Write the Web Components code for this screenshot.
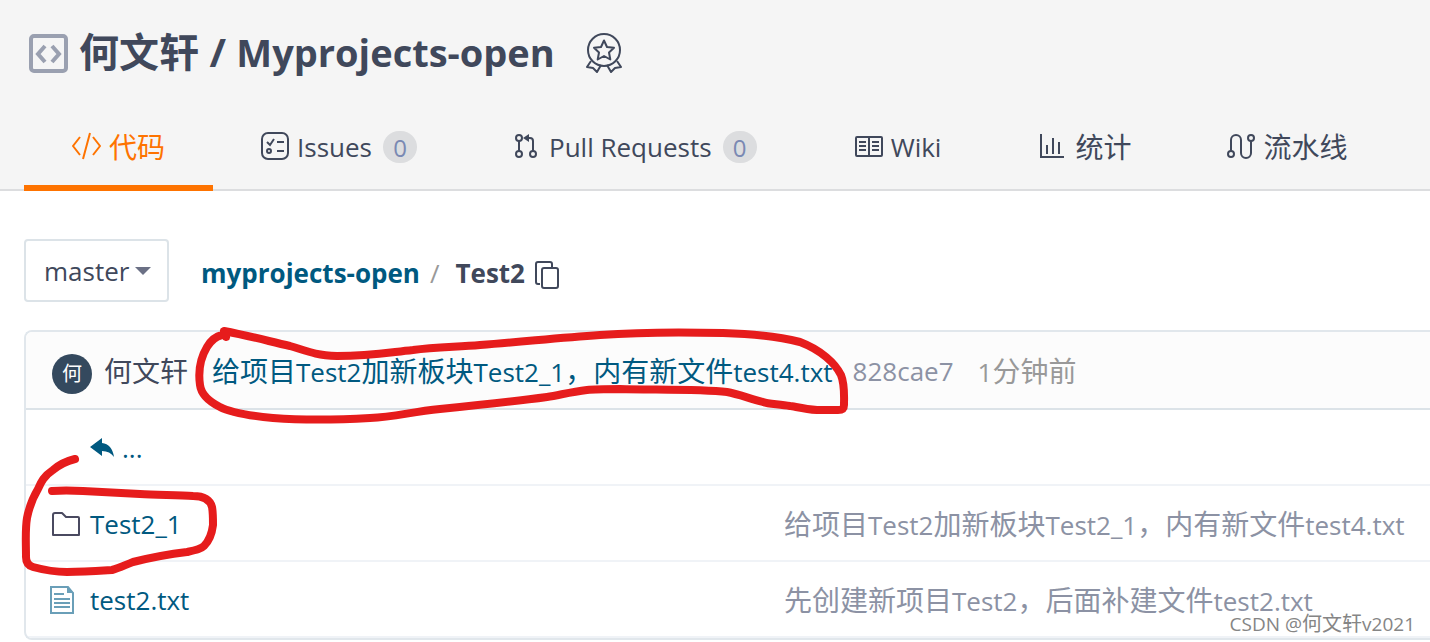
<!DOCTYPE html>
<html lang="zh-CN">
<head>
<meta charset="utf-8">
<meta name="viewport" content="width=device-width, initial-scale=1">
<title>何文轩 / Myprojects-open</title>
<style>
  body {
    margin: 0;
    background: #fff;
    color: #40485b;
    font: 26px/36px "Open Sans", "Noto Sans CJK SC", sans-serif;
    overflow-x: hidden;
  }
</style>
</head>
<body>
<repo-page></repo-page>

<script>
const ICONS = {
  repo: ['0 0 40 40', '<rect x="3" y="2" width="35" height="35" rx="3" fill="none" stroke="#9aa0b0" stroke-width="4"/><path d="M17 12l-7 8 7 8M24 12l7 8-7 8" fill="none" stroke="#9aa0b0" stroke-width="4"/>'],
  medal: ['0 0 38 40', '<g fill="none" stroke="currentColor" stroke-width="2" stroke-linejoin="round"><circle cx="19" cy="17" r="16"/><path d="M19 7.500l3 6.500 7 .8-5 4.700 1.300 7-6.300-3.500-6.300 3.500 1.300-7-5-4.700 7-.8z"/><path d="M6 28l-4 6 6 1 4 4 4-7M32 28l4 6-6 1-4 4-4-7"/></g>'],
  code: ['0 0 29 30', '<path d="M8 5l-7 9 7 9M21 5l7 9-7 9M18 1l-7 26" fill="none" stroke="currentColor" stroke-width="2"/>'],
  issues: ['1 1 28 30', '<g fill="none" stroke="currentColor" stroke-width="2"><rect x="2" y="2" width="26" height="26" rx="6"/><path d="M7 11l3 3 4-6M17 11h7M17 20h7"/><circle cx="9" cy="20" r="2"/></g>'],
  pulls: ['0 1 28 30', '<g fill="none" stroke="currentColor" stroke-width="2"><circle cx="6" cy="7" r="3"/><circle cx="6" cy="23" r="3"/><circle cx="20" cy="23" r="3"/><path d="M6 10v10M20 20V10q0-3-3-3h-4"/></g><path d="M10 7l6-4v8z" fill="currentColor"/>'],
  wiki: ['0 1 30 30', '<g fill="none" stroke="currentColor" stroke-width="2"><rect x="3" y="6" width="26" height="19" rx="1"/><path d="M16 6v19M6 11h7M6 15h7M6 19h7M19 11h7M19 15h7M19 19h7"/></g>'],
  stats: ['-2 1 30 30', '<path d="M2 3v23h23M8 23V14M14 23V7M20 23V11" fill="none" stroke="currentColor" stroke-width="2"/>'],
  pipeline: ['1 1 28 30', '<g fill="none" stroke="currentColor" stroke-width="2"><circle cx="5" cy="23" r="3"/><circle cx="25" cy="7" r="3"/><path d="M5 20V9a5 5 0 0 1 10 0v13a5 5 0 0 0 10 0V10"/></g>'],
  copy: ['0 0 26 30', '<g fill="none" stroke="currentColor" stroke-width="2"><path d="M6 24H4q-2 0-2-2V4q0-2 2-2h12q2 0 2 2v3"/><rect x="8" y="8" width="16" height="20" rx="2"/></g>'],
  back: ['0 0 24 22', '<path d="M0 10L12 1v5q10 1 12 14-4-6-12-6v5z" fill="currentColor"/>'],
  folder: ['-1 0 30 26', '<path d="M2 24V4q0-2 2-2h7l4 4h12q1 0 1 1v17z" fill="none" stroke="#4a4a60" stroke-width="2" stroke-linejoin="round"/>'],
  file: ['0 0 26 30', '<path d="M1 2h17l5 6v20H1zM4 9h10M4 14h16M4 18h16M4 22h16" fill="none" stroke="#6a9fb8" stroke-width="2"/><path d="M17 1v7h7z" fill="#6a9fb8"/>']
};

customElements.define('repo-icon', class extends HTMLElement {
  connectedCallback() {
    const [box, art] = ICONS[this.getAttribute('name')];
    const [, , w, h] = box.split(' ');
    this.attachShadow({ mode: 'open' }).innerHTML = `
      <style>:host { display: inline-flex; flex: none } svg { display: block }</style>
      <svg viewBox="${box}" width="${w}" height="${h}" aria-hidden="true">${art}</svg>`;
  }
});

const define = (tag, html) => {
  const template = document.createElement('template');
  template.innerHTML = html;
  customElements.define(tag, class extends HTMLElement {
    constructor() {
      super();
      this.attachShadow({ mode: 'open' }).append(template.content.cloneNode(true));
    }
  });
};

define('repo-title', `
  <style>
    :host { display: flex; align-items: center; height: 108px; padding-left: 28px; }
    h1 { margin: 0 30px 0 11px; padding-bottom: 4px; font-size: 40px; line-height: 52px; font-weight: 700; white-space: nowrap; }
    a { color: inherit; text-decoration: none; }
    .repo { font-size: 38px; }
    button { border: 0; padding: 0; background: none; color: inherit; }
  </style>
  <repo-icon name="repo"></repo-icon>
  <h1><a href="#owner">何文轩</a> / <a class="repo" href="#repo">Myprojects-open</a></h1>
  <button aria-label="推荐项目"><repo-icon name="medal"></repo-icon></button>
`);

define('nav-tab', `
  <style>
    :host { display: block; flex: none; }
    a { display: flex; align-items: center; gap: 8px; height: 77px; padding: 0 48px; color: inherit;
        text-decoration: none; white-space: nowrap; border-bottom: 6px solid transparent; }
    :host([active]) a { color: #fe7300; border-color: #fe7300; }
    ::slotted(b) { width: 34px; height: 32px; margin-left: 3px; border-radius: 16px; background: #dcdddf;
        color: #7a89b3; font-weight: 500; font-size: 24px; line-height: 34px; text-align: center; }
    ::slotted(.cjk) { font-size: 28px; }
  </style>
  <a href="#tab"><slot></slot></a>
`);

define('repo-header', `
  <style>
    :host { display: block; background: #f5f5f5; box-shadow: inset 0 -2px #dcdddf; }
    nav { display: flex; padding-left: 24px; overflow: hidden; }
  </style>
  <repo-title></repo-title>
  <nav>
    <nav-tab active><repo-icon name="code"></repo-icon><span class="cjk">代码</span></nav-tab>
    <nav-tab><repo-icon name="issues"></repo-icon><span>Issues</span><b>0</b></nav-tab>
    <nav-tab><repo-icon name="pulls"></repo-icon><span>Pull Requests</span><b>0</b></nav-tab>
    <nav-tab><repo-icon name="wiki"></repo-icon><span>Wiki</span></nav-tab>
    <nav-tab><repo-icon name="stats"></repo-icon><span class="cjk">统计</span></nav-tab>
    <nav-tab><repo-icon name="pipeline"></repo-icon><span class="cjk">流水线</span></nav-tab>
  </nav>
`);

define('branch-bar', `
  <style>
    :host { display: flex; align-items: center; gap: 32px; padding: 48px 24px 28px; }
    .branch { display: grid; align-items: center; }
    select, .caret { grid-area: 1 / 1; }
    select { appearance: none; width: 145px; height: 63px; padding: 0 18px; border: 2px solid #dce3e8; border-radius: 4px;
        background: #fff; color: inherit; font: inherit; }
    .caret { justify-self: end; margin-right: 18px; border: 8px solid transparent; border-top-color: #6b7085; border-bottom: 0; pointer-events: none; }
    .path { display: flex; align-items: center; font-weight: 700; white-space: nowrap; padding-top: 4px; }
    a { color: #005980; text-decoration: none; }
    i { font-style: normal; font-weight: 400; color: #999; margin: 0 16px 0 10px; }
    button { border: 0; padding: 0; margin: 8px 0 0 9px; background: none; color: inherit; }
  </style>
  <div class="branch">
    <select aria-label="分支"><option>master</option></select>
    <span class="caret"></span>
  </div>
  <div class="path"><a href="#root">myprojects-open</a><i>/</i><span>Test2</span>
    <button aria-label="复制路径"><repo-icon name="copy"></repo-icon></button></div>
`);

define('commit-bar', `
  <style>
    :host { display: flex; align-items: center; height: 74px; padding: 2px 0 0 26px; background: #fcfcfc;
        border-bottom: 2px solid #dce3e8; white-space: nowrap; }
    .avatar { flex: none; width: 40px; height: 40px; margin: 6px 12px 0 0; border-radius: 50%; background: #34495e; color: #fff;
        font-size: 20px; line-height: 40px; text-align: center; }
    .name { font-size: 28px; margin-right: 24px; }
    a { color: #005980; text-decoration: none; margin-right: 20px; }
    .hash { color: #8c92a4; margin-right: 24px; }
    time { color: #999; }
    .cjk { font-size: 28px; }
  </style>
  <span class="avatar">何</span><span class="name">何文轩</span>
  <a href="#commit"><span class="cjk">给项目</span>Test2<span class="cjk">加新板块</span>Test2_1<span class="cjk">，内有新文件</span>test4.txt</a>
  <a class="hash" href="#hash">828cae7</a><time>1<span class="cjk">分钟前</span></time>
`);

define('file-table', `
  <style>
    :host { display: block; }
    table { width: 100%; table-layout: fixed; border-collapse: separate; border-spacing: 0; white-space: nowrap; }
    col:first-child { width: 758px; }
    td { height: 72px; padding: 2px 0 0; border-bottom: 2px solid #f0f3f7; }
    .entry { display: flex; align-items: center; padding-left: 24px; color: #005980; }
    .entry a, .back { color: inherit; text-decoration: none; }
    .slot { display: flex; width: 40px; }
    .back { display: flex; align-items: center; gap: 8px; padding-left: 64px; color: #005980; }
    .message { color: #8c92a4; text-decoration: none; }
    .cjk { font-size: 28px; }
  </style>
  <table aria-label="文件">
    <colgroup><col><col></colgroup>
    <tbody>
      <tr><td><a class="back" href="#up"><repo-icon name="back"></repo-icon>...</a></td><td></td></tr>
      <tr><td><div class="entry"><span class="slot"><repo-icon name="folder"></repo-icon></span><a href="#folder">Test2_1</a></div></td>
        <td><a class="message" href="#c1"><span class="cjk">给项目</span>Test2<span class="cjk">加新板块</span>Test2_1<span class="cjk">，内有新文件</span>test4.txt</a></td></tr>
      <tr><td><div class="entry"><span class="slot"><repo-icon name="file"></repo-icon></span><a href="#file">test2.txt</a></div></td>
        <td><a class="message" href="#c2"><span class="cjk">先创建新项目</span>Test2<span class="cjk">，后面补建文件</span>test2.txt</a></td></tr>
    </tbody>
  </table>
`);

/* Freehand pen strokes laid over the page. */
define('pen-marks', `
  <style>
    :host { position: absolute; top: 0; left: 0; pointer-events: none; }
    svg { display: block; }
  </style>
  <svg width="860" height="600" viewBox="0 0 860 600" fill="none" stroke="#e61c1c" stroke-width="8" stroke-linecap="round" stroke-linejoin="round" aria-hidden="true">
    <path d="M226 337L224 331C250 336 268 341 290 346C307 351 314 355 337 356C370 356 385 353 413 350C435 347 458 347 480 345C530 341 558 338 600 335C640 332 685 332 723 333C755 334 780 337 800 342C821 350 835 363 841 375C845 385 844 397 844 405Q844 410 838 410H817C803 409 793 406 790 406C780 404 768 404 763 402C748 398 738 394 727 392C700 389 650 390 620 389C605 389 595 389 587 390C570 392 560 395 547 397C510 402 470 406 440 409C410 412 395 417 370 418C335 420 300 420 273 418C252 416 231 413 220 407C208 401 201 393 200 385C198 371 201 357 207 347Q213 337 222 335"/>
    <path d="M75 459C67 461 60 464 53 470C44 476 41 482 38 489C32 499 29 508 27 518C25 530 26 542 26 557Q26 565 33 567C44 570 56 572 67 572C84 572 97 571 112 570C120 568 125 565 133 562C149 558 170 554 187 552C196 550 201 549 204 546C210 540 212 533 213 525C213 518 213 512 212 507Q209 496 193 496C178 495 156 495 140 494C120 493 100 492 83 491Q65 490 52 491"/>
  </svg>
`);

define('water-mark', `
  <style>
    :host { position: absolute; right: 15px; bottom: 6px; font-size: 19px; line-height: 24px; color: #858585;
        text-shadow: -1px -1px #fff; white-space: nowrap; }
    ::slotted(.cjk) { font-size: 20px; }
  </style>
  <slot></slot>
`);

define('repo-page', `
  <style>
    :host { display: block; position: relative; overflow: hidden; }
    section { margin: 0 0 2px 24px; border: 2px solid #e1e7ec; border-right: 0; border-radius: 8px 0 0 8px; overflow: hidden; }
  </style>
  <repo-header></repo-header>
  <main>
    <branch-bar></branch-bar>
    <section><commit-bar></commit-bar><file-table></file-table></section>
  </main>
  <pen-marks></pen-marks>
  <water-mark>CSDN @<span class="cjk">何文轩</span>v2021</water-mark>
`);
</script>
</body>
</html>
